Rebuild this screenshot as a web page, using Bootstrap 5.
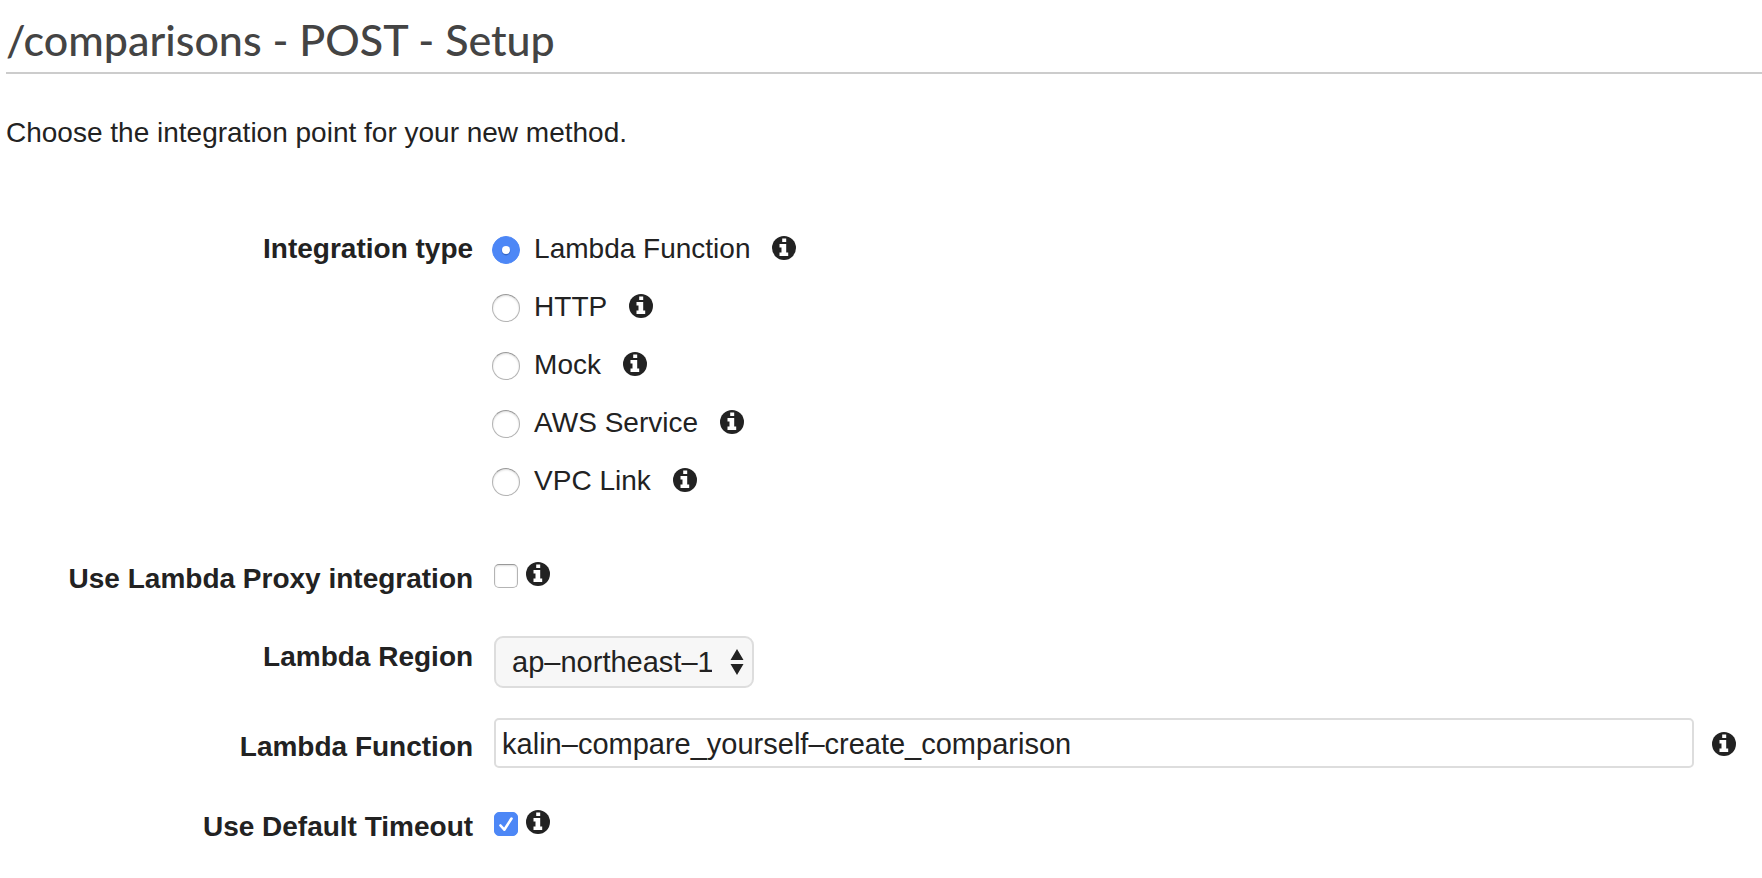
<!DOCTYPE html>
<html lang="en">
<head>
<meta charset="utf-8">
<meta name="viewport" content="width=device-width, initial-scale=1">
<title>/comparisons - POST - Setup</title>
<link href="https://cdn.jsdelivr.net/npm/bootstrap@5.3.0/dist/css/bootstrap.min.css" rel="stylesheet">
<style>
  body { font-family: "Liberation Sans", Arial, sans-serif; font-size: 28px; line-height: 32px; color: #222; background: #fff; }
  .setup-page { padding-left: 6px; }
  .setup-title { font-family: Lato, sans-serif; font-size: 43px; line-height: 56px; font-weight: 500; color: #444; padding: 12px 0 4px; border-bottom: 2px solid #ccc; }
  .intro { margin: 43px 0 84px; }
  .label-col { flex: 0 0 27%; padding-right: 7px; text-align: right; font-weight: 700; }
  .control-col { flex: 1 1 0; min-width: 0; padding-left: 14px; }
  .radio-list { display: grid; gap: 26px; padding-left: 0; margin: 0 0 65px -2px; }
  .radio-line label { margin: 0 22px 0 14px; }
  .setup-page .form-check-input { flex: none; float: none; width: 24px; height: 24px; margin: 2px 0 0; border: 1px solid #b4b4b4; border-top-color: #999; box-shadow: inset 0 1px 2px #ddd; background-color: #fff; }
  .setup-page .form-check-input[type=checkbox] { border-radius: 5px; }
  .setup-page .form-check-input[type=radio] { width: 28px; height: 28px; }
  .setup-page .form-check-input:checked { background-color: #4d87f6; border-color: #4d87f6; box-shadow: none; }
  .setup-page .form-check-input[type=radio]:checked { background-image: url("data:image/svg+xml,%3csvg xmlns='http://www.w3.org/2000/svg' viewBox='0 0 26 26'%3e%3ccircle cx='13' cy='14' r='4.4' fill='%233567c8'/%3e%3ccircle cx='13' cy='13' r='4' fill='%23fff'/%3e%3c/svg%3e"); }
  .setup-page .form-check-input[type=checkbox]:checked { background-image: url("data:image/svg+xml,%3csvg xmlns='http://www.w3.org/2000/svg' viewBox='0 0 22 22'%3e%3cpath d='M5.5 12.5l3.8 4.2L16.500 5.500' fill='none' stroke='%23fff' stroke-width='2.6' stroke-linecap='round' stroke-linejoin='round'/%3e%3c/svg%3e"); }
  .info-btn { flex: none; display: block; width: 24px; height: 24px; padding: 0; border: 0; background: none; color: #222; }
  .info-btn svg { display: block; width: 24px; height: 24px; }
  .radio-line .info-btn { margin-bottom: 2px; }
  .check-row label { padding-top: 1px; }
  .check-row .info-btn { margin-left: 8px; }
  .setup-page .form-select { width: 260px; height: 52px; padding: 0 40px 0 16px; font-size: 29px; line-height: 46px; color: #222; border: 2px solid #ddd; border-radius: 9px; background-color: #f7f7f7; background-size: 14px 26px; background-position: right 8px center;
    background-image: url("data:image/svg+xml,%3csvg xmlns='http://www.w3.org/2000/svg' viewBox='0 0 14 26'%3e%3cpath d='M7 0l6.500 11H.5zM7 26l6.500-11H.5z' fill='%23222'/%3e%3c/svg%3e"); }
  .setup-page .form-control { height: 50px; padding: 2px 6px 0; font-size: 29px; line-height: 44px; color: #222; border: 2px solid #ddd; border-radius: 5px; }
  .region-row { margin: 41px 0 30px; }
  .region-row .label-col { padding-top: 5px; }
  .function-row { margin-bottom: 42px; }
  .function-row .label-col { padding-top: 13px; }
  .function-row .control-col { gap: 18px; padding-right: 26px; }
  .function-row .info-btn { margin-top: 2px; }
</style>
</head>
<body>
<svg class="d-none" aria-hidden="true">
  <symbol id="info" viewBox="0 0 24 24">
    <circle cx="12" cy="12" r="12" fill="currentColor"/>
    <path d="M10.200 2.400h4v3.600h-4zM7.500 8h6.700v8.500h2v3.500H7.500v-3.500h2v-5h-2z" fill="#fff"/>
  </symbol>
</svg>
<main class="setup-page">
  <h1 class="setup-title mb-0">/comparisons - POST - Setup</h1>
  <p class="intro">Choose the integration point for your new method.</p>
  <form>
    <div class="d-flex" role="radiogroup" aria-labelledby="type-label">
      <div class="label-col" id="type-label">Integration type</div>
      <div class="control-col">
        <div class="radio-list">
          <div class="radio-line d-flex align-items-center">
            <input class="form-check-input" type="radio" name="type" id="type-lambda" checked>
            <label for="type-lambda">Lambda Function</label>
            <button type="button" class="info-btn" aria-label="About Lambda Function"><svg><use href="#info"/></svg></button>
          </div>
          <div class="radio-line d-flex align-items-center">
            <input class="form-check-input" type="radio" name="type" id="type-http">
            <label for="type-http">HTTP</label>
            <button type="button" class="info-btn" aria-label="About HTTP"><svg><use href="#info"/></svg></button>
          </div>
          <div class="radio-line d-flex align-items-center">
            <input class="form-check-input" type="radio" name="type" id="type-mock">
            <label for="type-mock">Mock</label>
            <button type="button" class="info-btn" aria-label="About Mock"><svg><use href="#info"/></svg></button>
          </div>
          <div class="radio-line d-flex align-items-center">
            <input class="form-check-input" type="radio" name="type" id="type-aws">
            <label for="type-aws">AWS Service</label>
            <button type="button" class="info-btn" aria-label="About AWS Service"><svg><use href="#info"/></svg></button>
          </div>
          <div class="radio-line d-flex align-items-center">
            <input class="form-check-input" type="radio" name="type" id="type-vpc">
            <label for="type-vpc">VPC Link</label>
            <button type="button" class="info-btn" aria-label="About VPC Link"><svg><use href="#info"/></svg></button>
          </div>
        </div>
      </div>
    </div>
    <div class="check-row d-flex">
      <label class="label-col" for="proxy">Use Lambda Proxy integration</label>
      <div class="control-col d-flex align-items-start">
        <input class="form-check-input" type="checkbox" id="proxy">
        <button type="button" class="info-btn" aria-label="About proxy integration"><svg><use href="#info"/></svg></button>
      </div>
    </div>
    <div class="region-row d-flex">
      <label class="label-col" for="region">Lambda Region</label>
      <div class="control-col">
        <select class="form-select" id="region"><option>ap–northeast–1</option></select>
      </div>
    </div>
    <div class="function-row d-flex">
      <label class="label-col" for="function">Lambda Function</label>
      <div class="control-col d-flex align-items-center">
        <input class="form-control" type="text" id="function" value="kalin–compare_yourself–create_comparison">
        <button type="button" class="info-btn" aria-label="About the function name"><svg><use href="#info"/></svg></button>
      </div>
    </div>
    <div class="check-row d-flex">
      <label class="label-col" for="timeout">Use Default Timeout</label>
      <div class="control-col d-flex align-items-start">
        <input class="form-check-input" type="checkbox" id="timeout" checked>
        <button type="button" class="info-btn" aria-label="About the default timeout"><svg><use href="#info"/></svg></button>
      </div>
    </div>
  </form>
</main>
<script src="https://cdn.jsdelivr.net/npm/bootstrap@5.3.0/dist/js/bootstrap.bundle.min.js"></script>
</body>
</html>
